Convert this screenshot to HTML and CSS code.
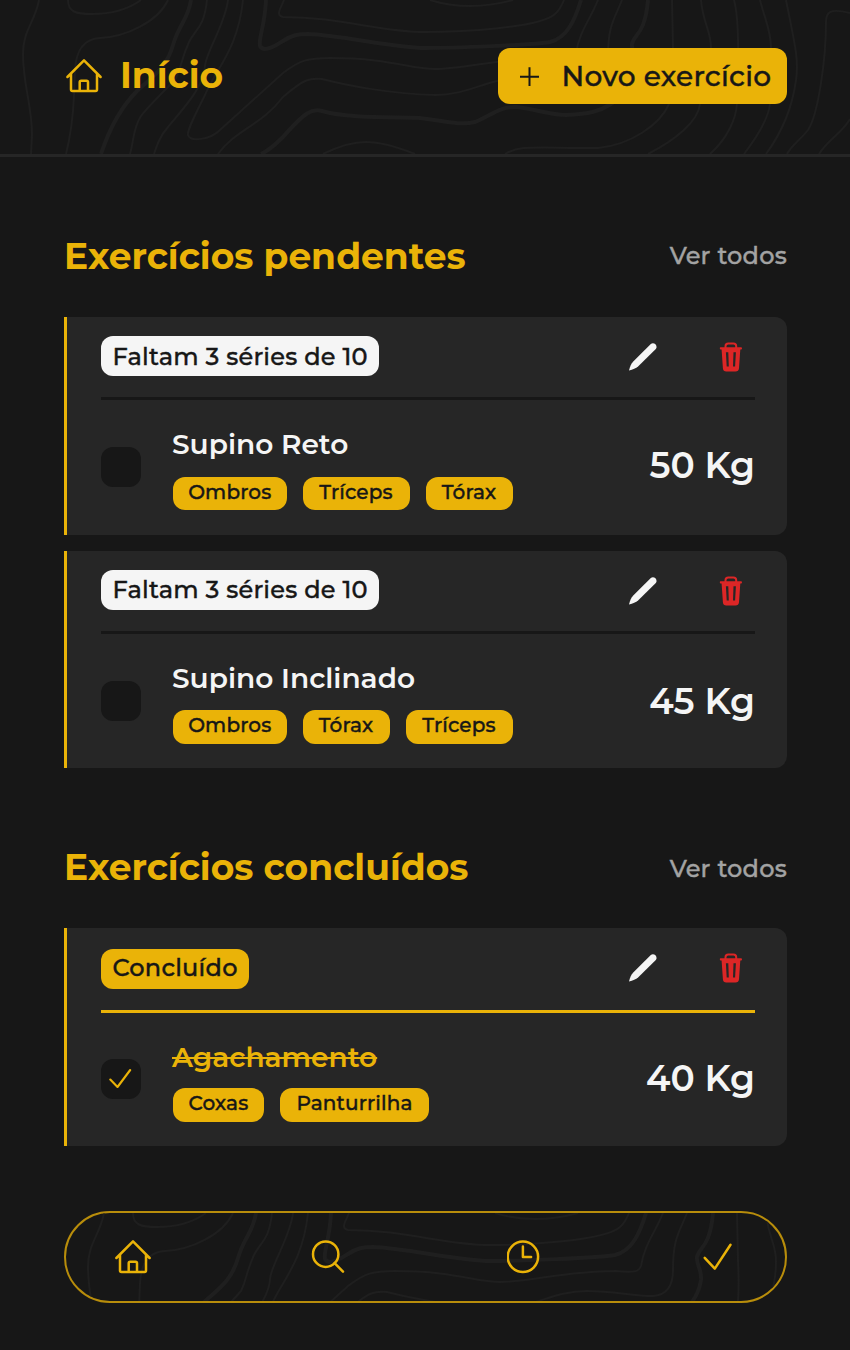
FILE: index.html
```html
<!DOCTYPE html>
<html lang="pt-BR">
<head>
<meta charset="utf-8">
<title>Início</title>
<link rel="stylesheet" href="styles.css">
</head>
<body>
<svg class="defs" width="0" height="0" aria-hidden="true">
  <symbol id="topo" viewBox="0 0 850 154">
    <g class="thin">
      <path d="M39 0C35 22 23 30 23 54C23 85 32 105 32 135L31 154"/>
      <path d="M68 0C68 12 76 14 92 14C115 14 130 8 141 0"/>
      <path d="M168 0C158 22 125 37 100 38C82 39 76 52 75 70L74 95C73 120 70 138 66 154"/>
      <path d="M207 0C204 28 196 28 189 42C180 62 182 66 176 78C166 90 150 104 141 116C133 128 134 140 130 154"/>
      <path d="M228 0C225 25 206 52 205 66C204 88 180 112 168 127C160 136 157 145 154 154"/>
      <path d="M243 0C238 50 215 70 205 95C195 115 187 130 188 135C190 142 210 140 220 130L283 73C300 60 308 58 330 58C390 58 410 69 435 69C465 69 500 58 550 58C572 60 574 58 576 53C580 30 590 20 598 0"/>
      <path d="M284 0C281 8 275 15 283 17C340 17 380 32 425 32C460 32 540 28 555 14C560 10 562 5 564 0"/>
      <path d="M430 0C455 8 485 8 513 0"/>
      <path d="M218 154C235 130 262 125 283 97C305 78 310 78 322 79C345 85 390 94 435 95C470 95 486 78 522 78C550 78 566 83 588 83C602 82 608 73 608 57C608 25 614 20 622 0"/>
      <path d="M672 0L673 48C675 90 672 100 669 104C660 125 630 145 598 148C530 148 520 145 505 154"/>
      <path d="M701 0C703 24 711 30 711 48C711 75 703 88 700 104C698 122 675 140 648 154"/>
      <path d="M734 0C740 22 738 70 737 104C736 118 728 138 710 154"/>
      <path d="M760 0C765 20 771 30 771 48L770 104C768 120 757 137 744 154"/>
      <path d="M786 0C795 45 799 60 796 80C792 110 780 135 766 154"/>
      <path d="M850 13C830 8 826 12 826 22C826 60 818 115 808 130C800 140 792 145 787 154"/>
      <path d="M850 119C842 133 828 140 819 154"/>
      <path d="M323 154C355 138 375 138 415 154"/>
    </g>
    <g class="thick">
      <path d="M191 0C188 20 179 24 173 45C166 70 150 78 137 91C118 110 108 133 101 154"/>
      <path d="M266 0C265 25 258 40 260 46C264 54 280 43 283 41C292 35 298 34 308 34C340 35 395 48 425 48C450 48 535 45 550 42C567 38 575 20 581 0"/>
      <path d="M648 0C645 35 634 34 632 44C631 52 637 56 636 67C634 80 626 94 611 104C600 111 590 114 566 115C550 115 540 110 517 107C500 106 490 116 475 122C460 126 440 120 420 118C390 117 345 118 322 111C312 108 305 112 283 137C278 142 270 150 261 154"/>
    </g>
  </symbol>
  <symbol id="home" viewBox="0 0 38 36">
    <path d="M2.4 19L19 2.4L35.6 19M6 16V31.5Q6 33 7.5 33H30.5Q32 33 32 31.5V16M14.7 33V24.2Q14.7 22.7 16.2 22.7H21.5Q23 22.7 23 24.2V33"/>
  </symbol>
  <symbol id="pencil" viewBox="0 0 30 30">
    <path d="M1 28.4C2 24.5 3 21.8 5.5 19.3L22.8 2C26 -.5 30.3 3.8 27.8 7L10.3 24.3C7.8 26.6 5 27.5 1 28.4Z"/>
  </symbol>
  <symbol id="trash" viewBox="0 0 24 30">
    <path class="handle" d="M6.5 6V4.2Q6.5 1.6 9.3 1.6H14.4Q17.2 1.6 17.2 4.2V6"/>
    <path class="can" fill-rule="evenodd" d="M1.8 5.2H22Q23 5.2 23 6.3T22 7.6H21.3L20 26.2Q19.6 29.4 16.5 29.4H7.3Q4.2 29.4 3.9 26.2L2.6 7.6H1.8Q.8 7.6.8 6.3T1.8 5.2ZM6.9 10.2L7.7 24.6H9.8L9.3 10.2ZM14.5 10.2L14 24.6H16.1L16.9 10.2Z"/>
  </symbol>
</svg>

<header class="header">
  <svg class="topo" width="850" height="154"><use href="#topo"/></svg>
  <div class="brand">
    <svg class="icon home" width="38" height="36"><use href="#home"/></svg>
    <h1>Início</h1>
  </div>
  <button class="new">
    <svg class="plus" width="20" height="20" viewBox="0 0 20 20"><path d="M0 10.8H19M9.5 1.3V20"/></svg>
    <span>Novo exercício</span>
  </button>
</header>

<main class="main">
  <section class="section">
    <div class="section-head"><h2>Exercícios pendentes</h2><a class="all">Ver todos</a></div>
    <div class="cards">
      <article class="card first">
        <div class="card-top">
          <span class="status">Faltam 3 séries de 10</span>
          <svg class="pencil" width="30" height="30"><use href="#pencil"/></svg>
          <svg class="trash" width="24" height="30"><use href="#trash"/></svg>
        </div>
        <div class="card-body">
          <span class="check"></span>
          <div class="info">
            <h3>Supino Reto</h3>
            <div class="tags"><span class="tag ombros">Ombros</span><span class="tag triceps">Tríceps</span><span class="tag torax">Tórax</span></div>
          </div>
          <strong class="weight">50 Kg</strong>
        </div>
      </article>
      <article class="card">
        <div class="card-top">
          <span class="status">Faltam 3 séries de 10</span>
          <svg class="pencil" width="30" height="30"><use href="#pencil"/></svg>
          <svg class="trash" width="24" height="30"><use href="#trash"/></svg>
        </div>
        <div class="card-body">
          <span class="check"></span>
          <div class="info">
            <h3>Supino Inclinado</h3>
            <div class="tags"><span class="tag ombros">Ombros</span><span class="tag torax">Tórax</span><span class="tag triceps">Tríceps</span></div>
          </div>
          <strong class="weight">45 Kg</strong>
        </div>
      </article>
    </div>
  </section>

  <section class="section finished">
    <div class="section-head"><h2>Exercícios concluídos</h2><a class="all">Ver todos</a></div>
    <article class="card done">
      <div class="card-top">
        <span class="status">Concluído</span>
        <svg class="pencil" width="30" height="30"><use href="#pencil"/></svg>
        <svg class="trash" width="24" height="30"><use href="#trash"/></svg>
      </div>
      <div class="card-body">
        <span class="check"><svg class="icon" width="24" height="22" viewBox="0 0 24 22"><path d="M1.3 11.5L8.5 19L21.2 2"/></svg></span>
        <div class="info">
          <h3>Agachamento</h3>
          <div class="tags"><span class="tag coxas">Coxas</span><span class="tag panturrilha">Panturrilha</span></div>
        </div>
        <strong class="weight">40 Kg</strong>
      </div>
    </article>
  </section>
</main>

<nav class="nav">
  <svg class="topo" width="850" height="154"><use href="#topo"/></svg>
  <svg class="icon" width="38" height="36"><use href="#home"/></svg>
  <svg class="icon" width="36" height="36" viewBox="0 0 36 36"><circle cx="14.7" cy="15.2" r="12.7"/><path d="M23.6 24.1L32 32.6"/></svg>
  <svg class="icon" width="36" height="36" viewBox="0 0 36 36"><circle cx="15.9" cy="17.8" r="15.2"/><path d="M15.9 7.5V17.9H24.1"/></svg>
  <svg class="icon" width="32" height="30" viewBox="0 0 32 30"><path d="M2.7 15.8L12.8 26.6L28.5 2.7"/></svg>
</nav>
</body>
</html>
```
FILE: styles.css
```css
* { box-sizing: border-box; }
body {
  margin: 0;
  height: 1350px;
  overflow: hidden;
  background: #171717;
  color: #f5f5f5;
  font-family: Montserrat, Inter, sans-serif;
  font-weight: 500;
  white-space: nowrap;
}
h1, h2, h3 { margin: 0; }
.new, .all, .status, .tag { -webkit-text-stroke: .4px currentColor; }
.defs { position: absolute; }
.thin, .thick { fill: none; stroke: #1f1f1f; stroke-width: 2; }
.thick { stroke-width: 4; }
.topo { position: absolute; left: 0; top: 0; z-index: -1; }
.nav .topo { left: -1px; }
.icon { fill: none; stroke: #eab308; stroke-width: 2.5; stroke-linecap: round; stroke-linejoin: round; flex: none; }

.header {
  position: relative;
  z-index: 0;
  height: 157px;
  border-bottom: 3px solid #262626;
  padding: 48px 63px 0 65px;
  display: flex;
  justify-content: space-between;
  align-items: flex-start;
}
.brand { display: flex; align-items: center; gap: 17px; height: 56px; color: #eab308; }
h1 { font-size: 36px; line-height: 56px; padding-bottom: 2px; }
.new {
  width: 289.5px;
  height: 56px;
  padding: 0 0 0 22px;
  border: 0;
  border-radius: 12px;
  background: #eab308;
  color: #171717;
  font: inherit;
  font-size: 28px;
  letter-spacing: .3px;
  display: flex;
  align-items: center;
  gap: 22px;
}
.plus { fill: none; stroke: #171717; stroke-width: 2; }

.main { padding: 76px 63px 0 64px; }
.section-head { height: 48px; display: flex; justify-content: space-between; align-items: center; }
h2 { color: #eab308; font-size: 36px; padding-bottom: 3px; }
.all { color: #a3a3a3; font-size: 24px; letter-spacing: .25px; padding-bottom: 4px; }
.finished .all { padding-bottom: 0; }
.cards { display: flex; flex-direction: column; gap: 16px; }
.section-head + * { margin-top: 36px; }
.finished { margin-top: 76px; }

.card {
  height: 217.5px;
  border-left: 3px solid #eab308;
  border-radius: 0 12px 12px 0;
  background: #262626;
  padding: 19px 32px 0 34px;
}
.card-top { height: 64px; border-bottom: 3px solid #171717; display: flex; align-items: flex-start; }
.status {
  height: 40px;
  padding: 0 11.2px 0 11.5px;
  border-radius: 12px;
  background: #f5f5f5;
  color: #171717;
  font-size: 24px;
  letter-spacing: .24px;
  line-height: 40px;
}
.first .status { line-height: 41px; }
.pencil { margin: 6px 61px 0 auto; fill: #f5f5f5; }
.trash { margin: 6px 12px 0 0; fill: #dc2626; }
.handle { fill: none; stroke: #dc2626; stroke-width: 2; }
.card-body { display: flex; height: 134px; align-items: center; }
.check { width: 40px; height: 40px; border-radius: 12px; background: #171717; display: grid; place-items: center; }
.check .icon { stroke-width: 2.1; }
.info { margin-left: 32px; padding-top: 3px; }
h3 { font-size: 28px; font-weight: 600; line-height: 36px; height: 50px; margin-left: -1px; }
.first h3 { line-height: 34px; }
.tags { display: flex; gap: 16px; }
.tag {
  height: 33.5px;
  border-radius: 12px;
  background: #eab308;
  color: #171717;
  font-size: 20px;
  letter-spacing: .15px;
  line-height: 31px;
  text-align: center;
}
.ombros { width: 113.5px; }
.triceps { width: 107px; }
.torax { width: 87px; }
.coxas { width: 91px; }
.panturrilha { width: 149px; }
.weight { margin-left: auto; font-size: 36px; font-weight: 600; }
.first .weight { padding-bottom: 4px; }
.done .card-top { height: 65.5px; border-color: #eab308; }
.done .status { background: #eab308; margin-top: 1.5px; line-height: 38px; }
.done .card-body { height: 132px; }
.done .weight { padding-bottom: 2px; }
.done h3 { color: #eab308; line-height: 38px; text-decoration: line-through; text-decoration-thickness: 2px; }

.nav {
  position: relative;
  z-index: 0;
  overflow: hidden;
  margin: 65px 63px 0 64px;
  height: 92px;
  border: 2px solid #b88d0b;
  border-radius: 46px;
  padding: 0 51px 0 48px;
  display: flex;
  align-items: center;
  justify-content: space-between;
}
```
